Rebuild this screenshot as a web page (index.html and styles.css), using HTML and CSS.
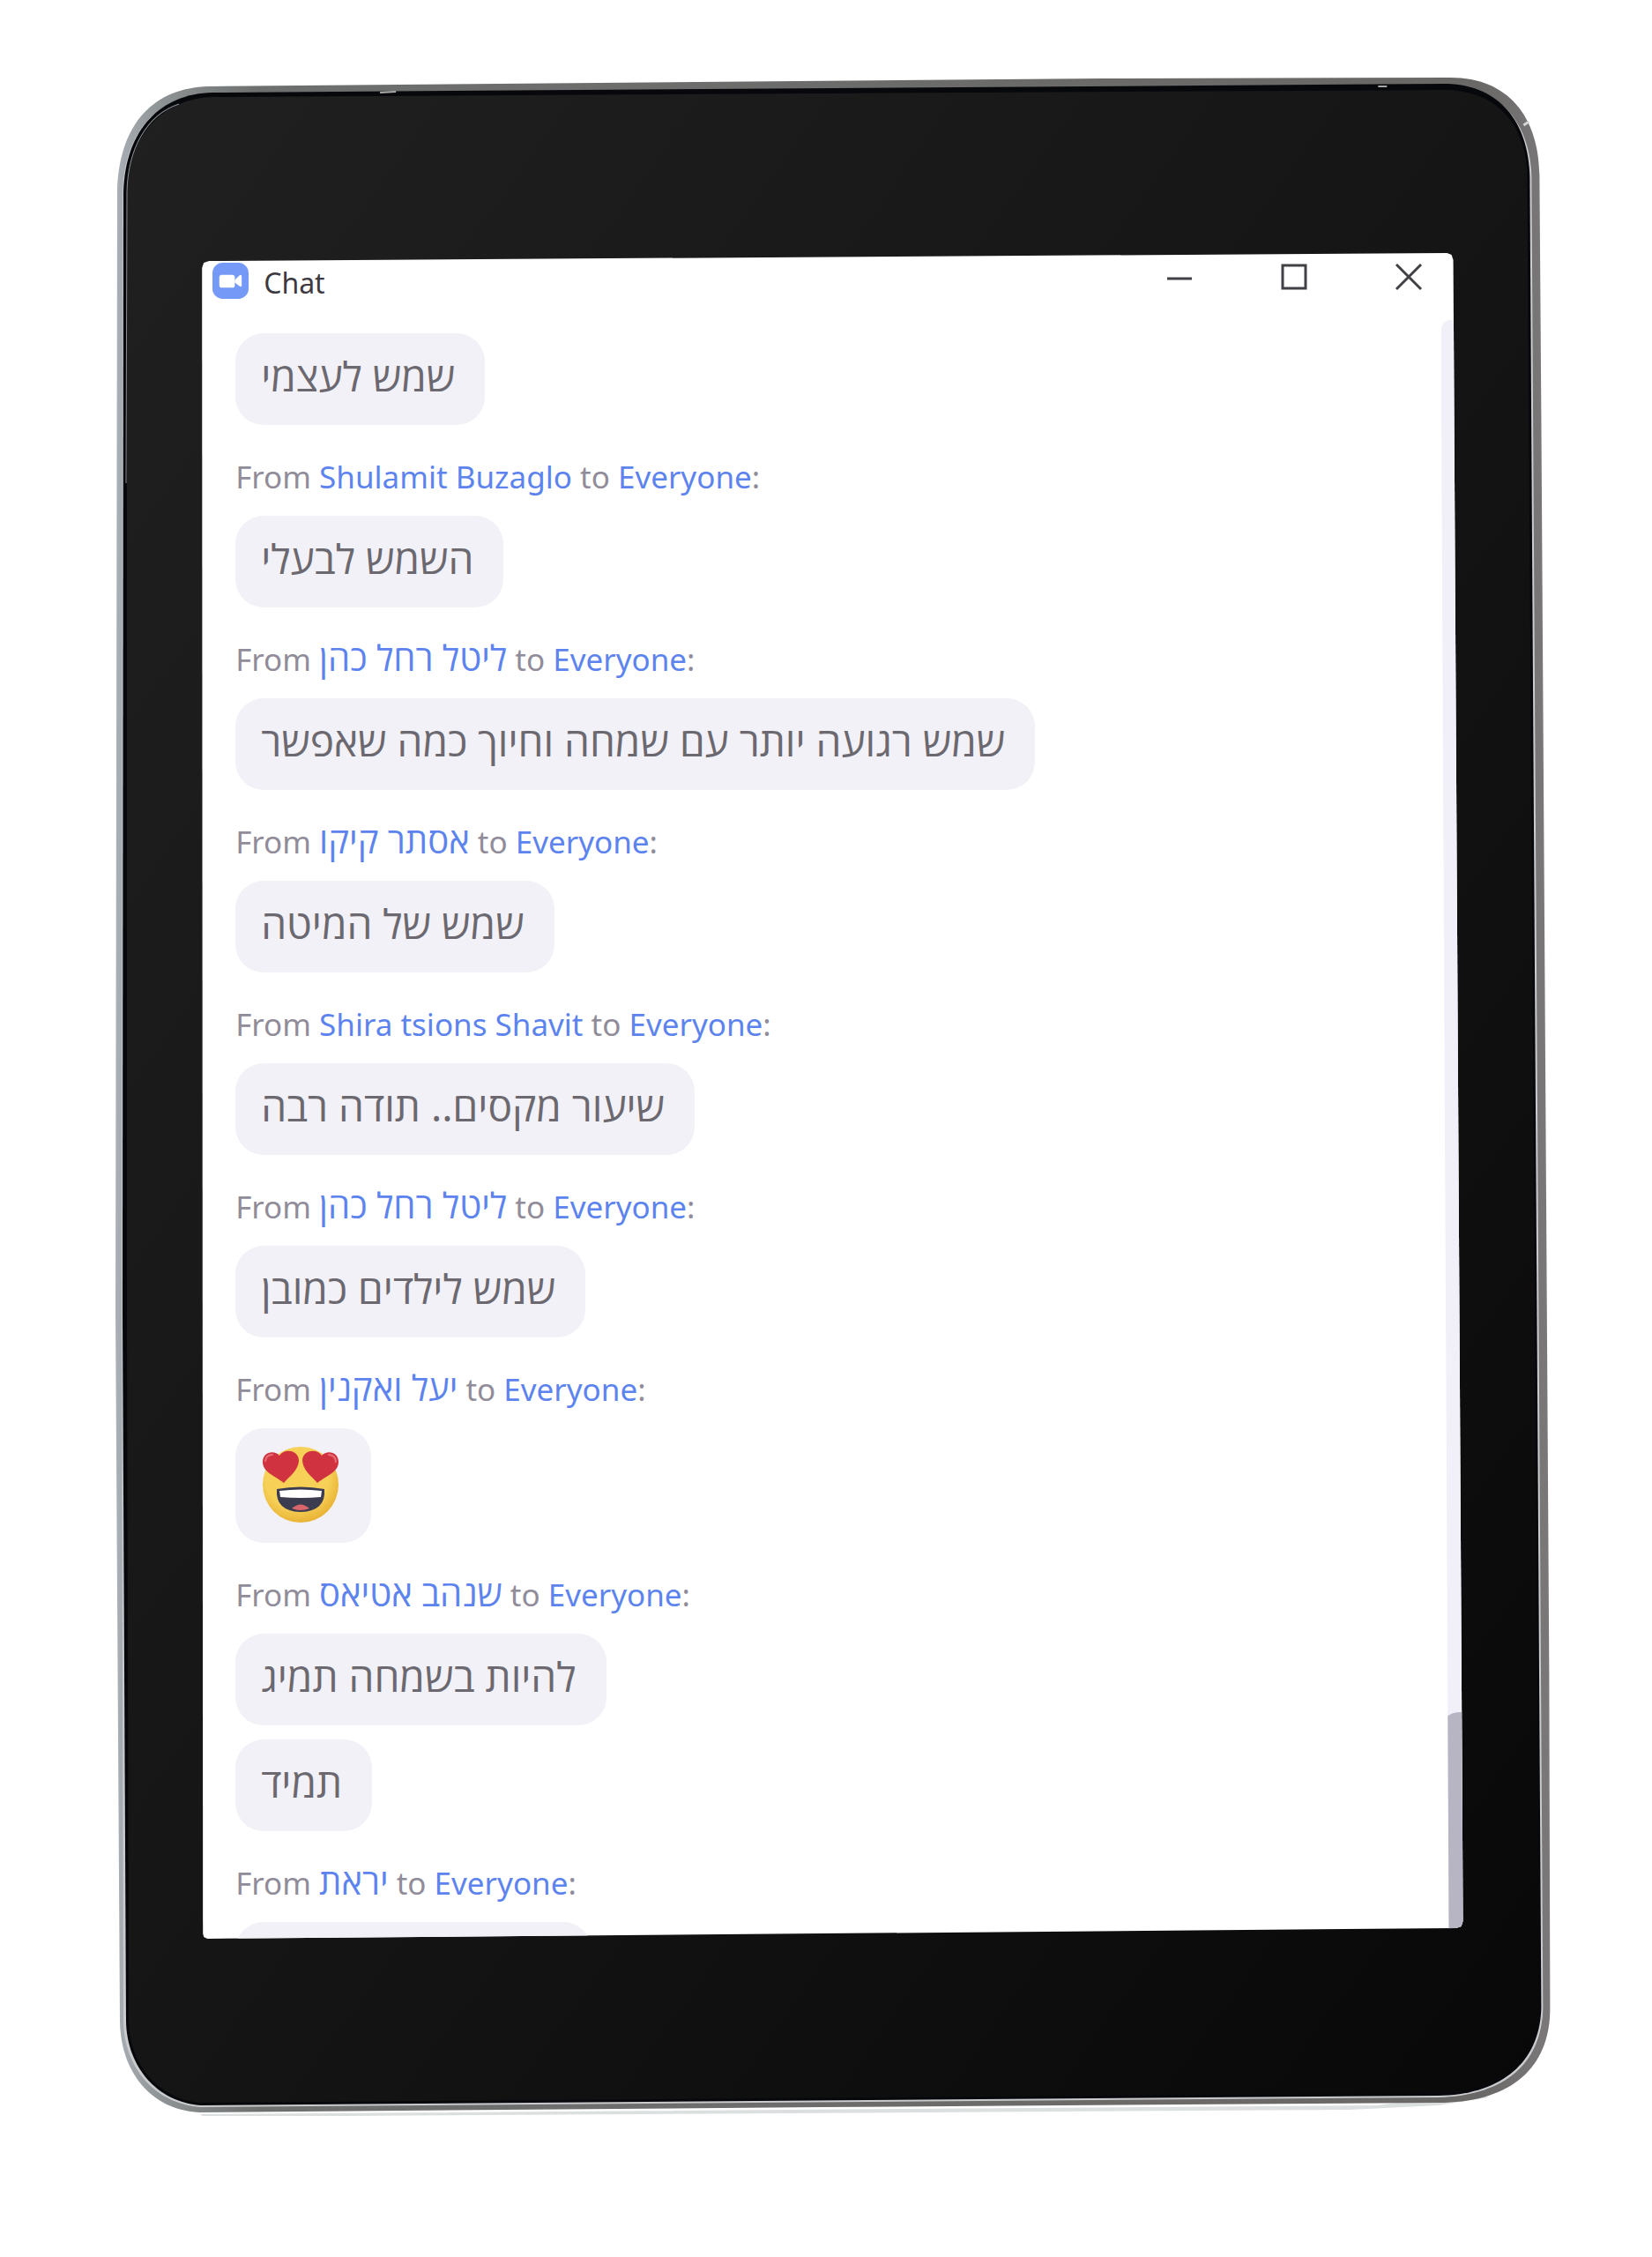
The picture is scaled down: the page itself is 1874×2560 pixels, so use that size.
FILE: index.html
```html
<!DOCTYPE html>
<html lang="en">
<head>
    <meta charset="utf-8" />
    <meta name="viewport" content="width=device-width, initial-scale=1" />
    <title>Chat</title>
    <link rel="stylesheet" href="styles.css">
</head>
<body>
    <div class="tablet">
        <!-- tablet frame, drawn behind the screen -->
        <svg class="tablet-frame" viewBox="0 0 1630 2312" preserveAspectRatio="none" aria-hidden="true">
            <defs>
                <linearGradient id="rim" x1="0" y1="0" x2="1" y2="0">
                    <stop offset="0" stop-color="#a9b0b6" />
                    <stop offset="0.03" stop-color="#8f9496" />
                    <stop offset="0.1" stop-color="#6d6f6e" />
                    <stop offset="0.95" stop-color="#6a6867" />
                    <stop offset="1" stop-color="#7b7879" />
                </linearGradient>
                <linearGradient id="glass" x1="0" y1="0" x2="1" y2="1">
                    <stop offset="0" stop-color="#202020" />
                    <stop offset="0.5" stop-color="#151515" />
                    <stop offset="1" stop-color="#080808" />
                </linearGradient>
            </defs>
            <path d="M96 2310 L1430 2300 L1545 2286 L1558 2291 L1500 2300 L1400 2305 L100 2313 Z" fill="#dcdfe0" />
            <path fill="url(#rim)" d="M105 10 L1120 1 L1514 0 C1580 0 1614 45 1615 110 L1617 382 L1626 1812 L1627 2190 C1627 2260 1580 2297 1500 2297 L800 2302 L95 2308 C40 2305 6 2262 5 2205 L0 1400 L2 130 C4 50 45 12 105 10 Z" />
            <path fill="#c9cbcd" d="M110 18 L1510 8 C1569 10 1604 50 1606 112 L1619 2190 C1617 2255 1573 2289 1500 2291 L96 2302 C45 2298 10 2258 9 2205 L7 1400 L8 130 C10 59 50 19 110 18 Z" />
            <path fill="#07080c" d="M110 17 L1510 7 C1570 9 1602 50 1604 112 L1617 2190 C1615 2252 1571 2288 1500 2289 L96 2300 C47 2296 13 2256 12 2205 L8 1400 L9 130 C11 58 52 18 110 17 Z" />
            <path fill="url(#glass)" d="M110 22 L1510 14 C1568 16 1600 54 1601 112 L1615 2190 C1613 2250 1570 2285 1500 2286 L96 2297 C49 2293 16 2254 15 2205 L13 1400 L13 130 C15 64 54 24 110 22 Z" />
            <path fill="none" stroke="#8b9094" d="M72 30 C36 42 14 80 13 130 L12 460" />
            <path d="M300 17 L318 16 M1432 10 L1442 10" stroke="#a8a8a8" stroke-width="2" />
            <path d="M1597 54 L1603 50" stroke="#d6d6d6" stroke-width="3" />
        </svg>

        <main class="screen">
            <header class="title-bar">
                <svg class="app-icon" viewBox="0 0 42 42" aria-hidden="true">
                    <rect width="42" height="42" rx="12" fill="#7599f7" />
                    <rect x="8" y="14" width="18" height="15" rx="3" fill="#fff" />
                    <path d="M26 20 L31 15 Q34 13 34 16 V26 Q34 29 31 27 L26 23 Z" fill="#fff" />
                </svg>
                <h1 class="title">Chat</h1>
                <div class="window-controls">
                    <button type="button" class="control" aria-label="Minimize">
                        <svg viewBox="0 0 32 32"><path d="M2 18 H30" /></svg>
                    </button>
                    <button type="button" class="control" aria-label="Maximize">
                        <svg viewBox="0 0 32 32"><rect x="3" y="3" width="26" height="26" /></svg>
                    </button>
                    <button type="button" class="control" aria-label="Close">
                        <svg viewBox="0 0 32 32"><path d="M2 2 L30 30 M30 2 L2 30" /></svg>
                    </button>
                </div>
            </header>

            <div class="chat">
                <div class="messages">
                    <p class="bubble" dir="rtl" lang="he">שמש לעצמי</p>

                    <p class="sender">From <bdi class="name">Shulamit Buzaglo</bdi> to <span class="name">Everyone</span>:</p>
                    <p class="bubble" dir="rtl" lang="he">השמש לבעלי</p>

                    <p class="sender">From <bdi class="name" lang="he">ליטל רחל כהן</bdi> to <span class="name">Everyone</span>:</p>
                    <p class="bubble" dir="rtl" lang="he">שמש רגועה יותר עם שמחה וחיוך כמה שאפשר</p>

                    <p class="sender">From <bdi class="name" lang="he">אסתר קיקו</bdi> to <span class="name">Everyone</span>:</p>
                    <p class="bubble" dir="rtl" lang="he">שמש של המיטה</p>

                    <p class="sender">From <bdi class="name">Shira tsions Shavit</bdi> to <span class="name">Everyone</span>:</p>
                    <p class="bubble" dir="rtl" lang="he">שיעור מקסים.. תודה רבה</p>

                    <p class="sender">From <bdi class="name" lang="he">ליטל רחל כהן</bdi> to <span class="name">Everyone</span>:</p>
                    <p class="bubble" dir="rtl" lang="he">שמש לילדים כמובן</p>

                    <p class="sender">From <bdi class="name" lang="he">יעל ואקנין</bdi> to <span class="name">Everyone</span>:</p>
                    <div class="bubble bubble-emoji">
                        <svg class="emoji" viewBox="0 0 88 88" role="img" aria-label="Smiling face with heart eyes">
                            <defs>
                                <radialGradient id="face" cx="0.45" cy="0.4" r="0.6">
                                    <stop offset="0.7" stop-color="#f6d057" />
                                    <stop offset="1" stop-color="#e9b436" />
                                </radialGradient>
                            </defs>
                            <circle cx="44" cy="44" r="43" fill="url(#face)" />
                            <path d="M25 42 C15 34 1 30 1 18 C1 7 14 4 20 11 C25 3 41 4 42 16 C42 27 32 34 25 42 Z" fill="#d0333f" />
                            <path d="M63 42 C73 34 87 30 87 18 C87 7 74 4 68 11 C63 3 47 4 46 16 C46 27 56 34 63 42 Z" fill="#d0333f" />
                            <path d="M4 17 Q5 10 12 10 M76 10 Q84 11 84 18" fill="none" stroke="#e8707a" stroke-width="2" stroke-linecap="round" />
                            <path d="M17 49 Q44 44 71 49 Q73 74 44 75 Q15 74 17 49 Z" fill="#3b3c50" />
                            <path d="M20 51 Q44 48 68 51 L67 58 Q44 60 21 58 Z" fill="#fff" />
                            <path d="M34 71 Q44 62 54 71 Q44 75 34 71 Z" fill="#d9656c" />
                        </svg>
                    </div>

                    <p class="sender">From <bdi class="name" lang="he">שנהב אטיאס</bdi> to <span class="name">Everyone</span>:</p>
                    <p class="bubble" dir="rtl" lang="he">להיות בשמחה תמיג</p>
                    <p class="bubble bubble-next" dir="rtl" lang="he">תמיד</p>

                    <p class="sender">From <bdi class="name" lang="he">יראת</bdi> to <span class="name">Everyone</span>:</p>
                    <div class="bubble bubble-cut"></div>
                </div>
                <div class="scrollbar">
                    <div class="scroll-thumb"></div>
                </div>
            </div>
        </main>
    </div>
</body>
</html>
```
FILE: styles.css
```css
* {
    box-sizing: border-box;
}

body {
    margin: 0;
    height: 100vh;
    padding: 88px 6% 160px 7%;
    display: flex;
    background-color: #fff;
    font-family: "Noto Sans", "Open Sans", sans-serif;
}

/* Tablet */
.tablet {
    position: relative;
    flex: 1;
    display: flex;
    padding: 199px 102px 201px 98px;
}

.tablet-frame {
    position: absolute;
    inset: 0;
    width: 100%;
    height: 100%;
}

/* Screen, slightly turned away so its edges are not square */
.screen {
    position: relative;
    flex: 1;
    min-width: 0;
    display: flex;
    flex-direction: column;
    overflow: hidden;
    background-color: #fff;
    clip-path: polygon(
        0 17px, 2px 11px, 8px 9px,
        calc(100% - 18px) 0, calc(100% - 13px) 2px, calc(100% - 11px) 8px,
        100% calc(100% - 20px), calc(100% - 2px) calc(100% - 14px), calc(100% - 8px) calc(100% - 12px),
        6px 100%, 2px calc(100% - 2px), 1px calc(100% - 6px)
    );
}

/* Title bar */
.title-bar {
    display: flex;
    align-items: flex-start;
    height: 76px;
    padding: 11px 46px 0 12px;
}

.app-icon {
    width: 41px;
    height: 41px;
}

.title {
    margin: 0 0 0 17px;
    font-size: 32px;
    font-weight: 400;
    line-height: 46px;
    color: #3c3a40;
}

.window-controls {
    display: flex;
    gap: 98px;
    margin-left: auto;
}

.control {
    width: 32px;
    height: 32px;
    padding: 0;
    border: none;
    background: none;
    cursor: pointer;
}

.control svg {
    display: block;
    fill: none;
    stroke: #414145;
    stroke-width: 3;
}

/* Chat */
.chat {
    flex: 1;
    min-height: 0;
    display: flex;
}

.messages {
    flex: 1;
    display: flex;
    flex-direction: column;
    align-items: flex-start;
    padding: 15px 24px 0 38px;
    overflow: hidden;
}

.sender {
    flex: none;
    height: 103px;
    margin: 0;
    padding-top: 35px;
    font-size: 35px;
    line-height: 48px;
    color: #918c99;
}

.name {
    color: #5d84ee;
}

.name:lang(he) {
    font-size: 40px;
    line-height: 40px;
}

.bubble {
    flex: none;
    margin: 0;
    padding: 20px 34px 28px 29px;
    border-radius: 32px;
    background-color: #f2f1f7;
    font-size: 46px;
    line-height: 56px;
    color: #6b686f;
}

.bubble-emoji {
    padding: 20px 36px 22px 30px;
}

.bubble-next {
    margin-top: 16px;
}

.bubble-cut {
    width: 404px;
    height: 104px;
}

.emoji {
    display: block;
    width: 88px;
    height: 88px;
}

/* Scrollbar */
.scrollbar {
    width: 25px;
    display: flex;
    flex-direction: column;
    justify-content: flex-end;
    background-color: #f1f0f8;
    clip-path: polygon(0 10px, 3px 3px, 9px 0, 100% 0, 100% 100%, 9px 100%);
}

.scroll-thumb {
    height: 14%;
    border-top-left-radius: 20px;
    background-color: #b7b5c3;
}
```
